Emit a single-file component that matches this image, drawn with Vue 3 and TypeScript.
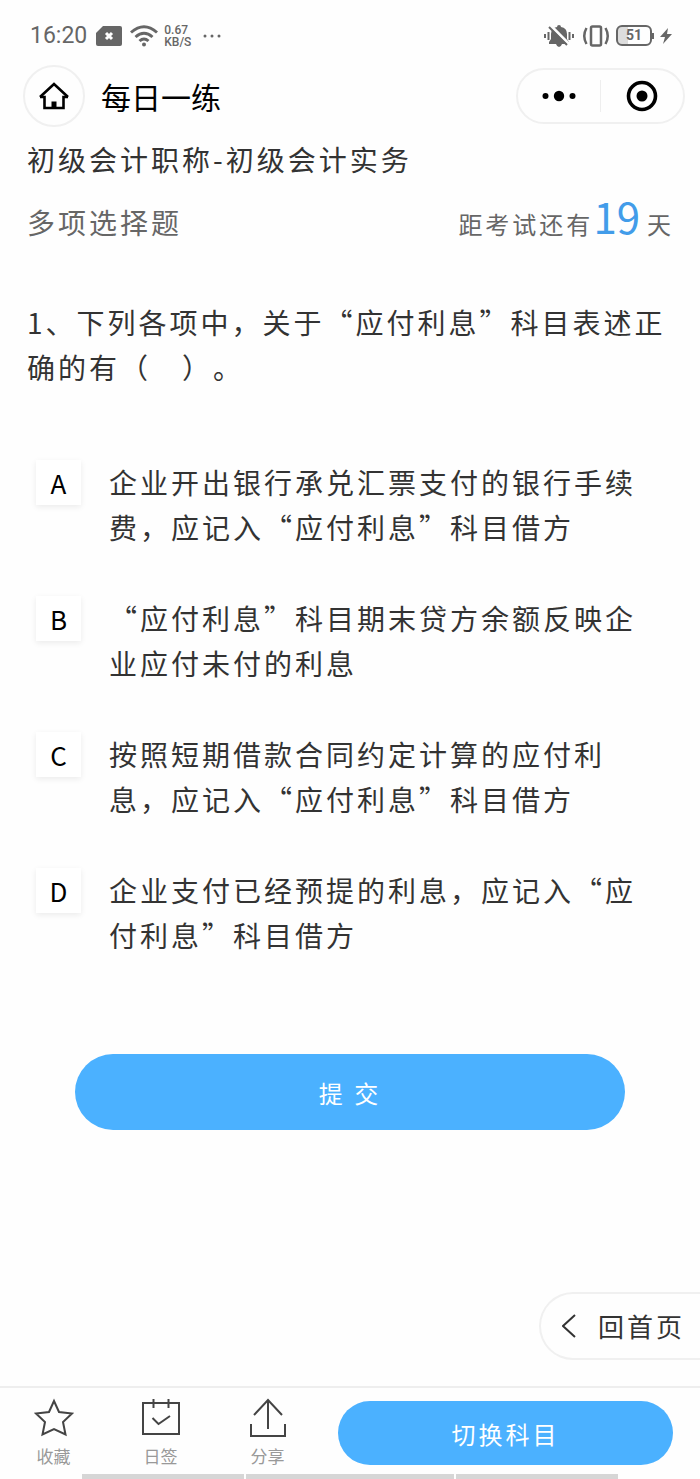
<script setup lang="ts">
import { ref } from 'vue'

interface Option {
  key: string
  text: string
}

const daysLeft = 19
const options: Option[] = [
  { key: 'A', text: '企业开出银行承兑汇票支付的银行手续费，应记入“应付利息”科目借方' },
  { key: 'B', text: '“应付利息”科目期末贷方余额反映企业应付未付的利息' },
  { key: 'C', text: '按照短期借款合同约定计算的应付利息，应记入“应付利息”科目借方' },
  { key: 'D', text: '企业支付已经预提的利息，应记入“应付利息”科目借方' },
]
const selected = ref<string[]>([])
</script>

<template>
  <div class="page" lang="zh-CN">
    <div class="status">
      <div class="status-group">
        <span class="clock">16:20</span>
        <svg class="sim" width="26" height="20" viewBox="0 0 26 20">
          <path d="M7 0H24Q26 0 26 2V18Q26 20 24 20H2Q0 20 0 18V7Z" fill="#666" />
          <path d="M10 7L16 13M16 7L10 13" stroke="#fff" stroke-width="3" />
        </svg>
        <svg class="wifi" width="28" height="22" viewBox="0 0 28 22" fill="none" stroke="#666" stroke-width="3">
          <path d="M1 7.500Q14 -4 27 7.500" />
          <path d="M5.500 12Q14 4.500 22.500 12" />
          <path d="M9.500 16Q14 12 18.500 16" />
          <circle cx="14" cy="19.500" r="2" fill="#666" stroke="none" />
        </svg>
        <span class="speed">0.67<br />KB/S</span>
        <svg class="more" width="18" height="4" viewBox="0 0 18 4" fill="#666">
          <circle cx="2" cy="2" r="1.500" /><circle cx="9" cy="2" r="1.500" /><circle cx="16" cy="2" r="1.500" />
        </svg>
      </div>
      <div class="status-group">
        <svg width="30" height="24" viewBox="0 0 30 24">
          <path d="M15 1Q17 1 17 3Q23 4 23 10V15L25 18V20H5V18L7 15V10Q7 4 13 3Q13 1 15 1Z" fill="#666" />
          <path d="M12 20H18Q17 23 15 23T12 20Z" fill="#666" />
          <path d="M6 1L26 21" stroke="#fefefe" stroke-width="3" />
          <path d="M5 3L23 21" stroke="#666" stroke-width="2" />
          <path d="M1 10V14M4.500 8V16M25.500 8V16M29 10V14" stroke="#666" stroke-width="2" />
        </svg>
        <svg class="vibrate" width="28" height="24" viewBox="0 0 28 24" fill="none" stroke="#666" stroke-width="2.500">
          <rect x="9" y="2.500" width="10" height="19" rx="1.500" />
          <path d="M4.500 4Q0 12 4.500 20M23.500 4Q28 12 23.500 20" />
        </svg>
        <span class="battery"><span class="battery-body">51</span><span class="battery-tip"></span></span>
        <svg class="bolt" width="12" height="16" viewBox="0 0 12 16"><path d="M8 0L0 9H5L3 16L12 6H7Z" fill="#666" /></svg>
      </div>
    </div>

    <header class="header">
      <button class="home" type="button" aria-label="首页">
        <svg width="32" height="30" viewBox="0 0 32 30" fill="none" stroke="#000" stroke-width="2.600">
          <path d="M2 16L16 3L30 16" />
          <path d="M2 16H6.500V27H25.500V16H30" />
          <path d="M13.500 20.500H18.500V27H13.500Z" fill="#000" stroke="none" />
        </svg>
      </button>
      <h1>每日一练</h1>
      <div class="capsule">
        <button type="button" aria-label="更多">
          <svg width="34" height="12" viewBox="0 0 34 12"><circle cx="3.500" cy="6" r="3" /><circle cx="17" cy="6" r="5.200" /><circle cx="30.500" cy="6" r="3" /></svg>
        </button>
        <i class="divider"></i>
        <button type="button" aria-label="关闭">
          <svg width="32" height="32" viewBox="0 0 32 32"><circle cx="16" cy="16" r="13.500" fill="none" stroke="#000" stroke-width="3.600" /><circle cx="16" cy="16" r="5.500" /></svg>
        </button>
      </div>
    </header>

    <main class="main">
      <h2>初级会计职称-初级会计实务</h2>
      <div class="meta">
        <span class="kind">多项选择题</span>
        <span class="countdown">距考试还有<b>{{ daysLeft }}</b><span>天</span></span>
      </div>
      <form @submit.prevent>
        <fieldset>
          <legend>1、下列各项中，关于“应付利息”科目表述正确的有（　）。</legend>
          <label v-for="o in options" :key="o.key" class="option">
            <span class="badge">
              <input v-model="selected" type="checkbox" :value="o.key" />
              <span>{{ o.key }}</span>
            </span>
            <span class="option-text">{{ o.text }}</span>
          </label>
        </fieldset>
        <button class="submit" type="submit">提 交</button>
      </form>
    </main>

    <a class="back" href="#">
      <svg width="14" height="24" viewBox="0 0 14 24" fill="none" stroke="#333" stroke-width="2"><path d="M13 1L1 12L13 23" /></svg>
      回首页
    </a>

    <footer class="footer">
      <nav>
        <button type="button">
          <svg width="40" height="40" viewBox="0 0 40 40" fill="none" stroke="#444" stroke-width="2">
            <path d="M20 3L25 14L38 15.500L29 24L31.500 36.500L20 31L8.500 36.500L11 24L2 15.500L15 14Z" />
          </svg>
          收藏
        </button>
        <button type="button">
          <svg width="40" height="40" viewBox="0 0 40 40" fill="none" stroke="#444" stroke-width="2">
            <path d="M2 5H38V36H2ZM12.500 1V10M27.500 1V10M11.500 20L17.500 26L29 18" />
          </svg>
          日签
        </button>
        <button type="button">
          <svg width="40" height="40" viewBox="0 0 40 40" fill="none" stroke="#444" stroke-width="2">
            <path d="M20 31V2M6 17L20 2L34 17M3 26V38H37V26" />
          </svg>
          分享
        </button>
      </nav>
      <button class="switch" type="button">切换科目</button>
    </footer>
    <div class="gesture"><i></i><i></i><i></i></div>
  </div>
</template>

<style>
body {
  margin: 0;
  background: #fefefe;
}
</style>

<style scoped>
.page {
  display: flex;
  flex-direction: column;
  min-height: 100vh;
  box-sizing: border-box;
  color: #333;
  background: #fefefe;
  font: 28px/45px "Noto Sans CJK SC", sans-serif;
  text-spacing-trim: space-all;
}
button {
  padding: 0;
  border: 0;
  background: none;
  font: inherit;
  color: inherit;
  cursor: pointer;
}
svg {
  display: block;
  flex: none;
}
.status {
  display: flex;
  justify-content: space-between;
  align-items: center;
  height: 65px;
  padding: 6px 28px 0 30px;
  box-sizing: border-box;
  color: #666;
}
.status-group {
  display: flex;
  align-items: center;
}
.clock {
  font: 23px/28px Roboto, sans-serif;
}
.sim {
  margin-left: 9px;
}
.wifi {
  margin-left: 8px;
}
.speed {
  margin-left: 6px;
  font: 500 12px/12px Roboto, sans-serif;
}
.more {
  margin-left: 12px;
}
.vibrate {
  margin-left: 8px;
}
.battery {
  display: flex;
  align-items: center;
  margin-left: 6px;
}
.battery-body {
  width: 32px;
  border: 2px solid #666;
  border-radius: 6px;
  background: linear-gradient(to right, #ddd 30%, transparent 30%);
  font: 700 14px/17px Roboto, sans-serif;
  text-align: center;
}
.battery-tip {
  width: 2px;
  height: 6px;
  background: #666;
}
.bolt {
  margin-left: 6px;
}
.header {
  display: flex;
  align-items: center;
  padding: 0 15px 0 23px;
}
.home {
  display: grid;
  place-items: center;
  width: 62px;
  height: 62px;
  border: 2px solid #f0f0f0;
  border-radius: 50%;
}
h1 {
  margin: 0 auto 0 16px;
  color: #000;
  font-size: 30px;
  font-weight: 400;
}
.capsule {
  display: flex;
  align-items: center;
  width: 169px;
  height: 56px;
  box-sizing: border-box;
  border: 2px solid #f0f0f0;
  border-radius: 28px;
}
.capsule button {
  display: grid;
  flex: 1;
  place-items: center;
  height: 100%;
}
.divider {
  width: 1px;
  height: 32px;
  background: #eee;
}
.main {
  padding: 10px 27px 0;
}
h2 {
  margin: 0;
  font-size: 28px;
  font-weight: 400;
  letter-spacing: 3px;
}
.meta {
  display: flex;
  justify-content: space-between;
  align-items: baseline;
  margin-top: 12px;
  line-height: 44px;
  color: #666;
}
.kind {
  letter-spacing: 3px;
}
.countdown {
  padding-right: 2px;
  font-size: 24px;
  letter-spacing: 3px;
}
.countdown b {
  color: #429ce9;
  font-size: 42px;
  font-weight: 400;
  letter-spacing: 0;
}
.countdown span {
  margin-left: 7px;
  letter-spacing: 0;
}
form {
  margin-top: 54px;
}
fieldset {
  display: flex;
  flex-direction: column;
  gap: 46px;
  margin: 0;
  padding: 0;
  border: 0;
}
legend {
  padding: 0;
  margin-bottom: 70px;
  letter-spacing: 3px;
}
.option {
  display: flex;
  gap: 28px;
  padding: 0 23px 0 9px;
}
.badge {
  display: grid;
  flex: none;
  place-items: center;
  width: 45px;
  height: 45px;
  background: #fff;
  box-shadow: 0 2px 6px rgba(0, 0, 0, 0.08);
  color: #000;
  font-size: 26px;
}
.badge > * {
  grid-area: 1 / 1;
}
.badge input {
  width: 45px;
  height: 45px;
  margin: 0;
  appearance: none;
}
.badge input:checked {
  background: #4bb1ff;
}
.option-text {
  letter-spacing: 3px;
}
.submit {
  display: block;
  width: 85%;
  height: 76px;
  margin: 96px auto 0;
  border-radius: 38px;
  background: #4bb1ff;
  color: #fff;
  font-size: 24px;
  letter-spacing: 3px;
}
.back {
  display: flex;
  align-items: center;
  align-self: flex-end;
  gap: 22px;
  margin: auto 0 26px;
  padding: 0 15px 0 21px;
  border: 2px solid #f0f0f0;
  border-right: 0;
  border-radius: 34px 0 0 34px;
  color: #333;
  font-size: 26px;
  line-height: 64px;
  letter-spacing: 3px;
  text-decoration: none;
}
.footer {
  display: flex;
  justify-content: space-between;
  align-items: center;
  padding: 10px 27px 6px 0;
  border-top: 2px solid #eee;
}
nav {
  display: flex;
}
nav button {
  display: flex;
  flex-direction: column;
  align-items: center;
  width: 107px;
  color: #999;
  font-size: 17px;
  line-height: 24px;
}
nav button svg {
  margin-bottom: 6px;
}
.switch {
  width: 335px;
  height: 64px;
  border-radius: 32px;
  background: #4bb1ff;
  color: #fff;
  font-size: 24px;
  letter-spacing: 3px;
}
.gesture {
  display: grid;
  grid-template-columns: 163fr 208fr 163fr;
  gap: 2px;
  height: 5px;
  padding: 0 82px;
}
.gesture i {
  background: #d6d6d6;
}
</style>
